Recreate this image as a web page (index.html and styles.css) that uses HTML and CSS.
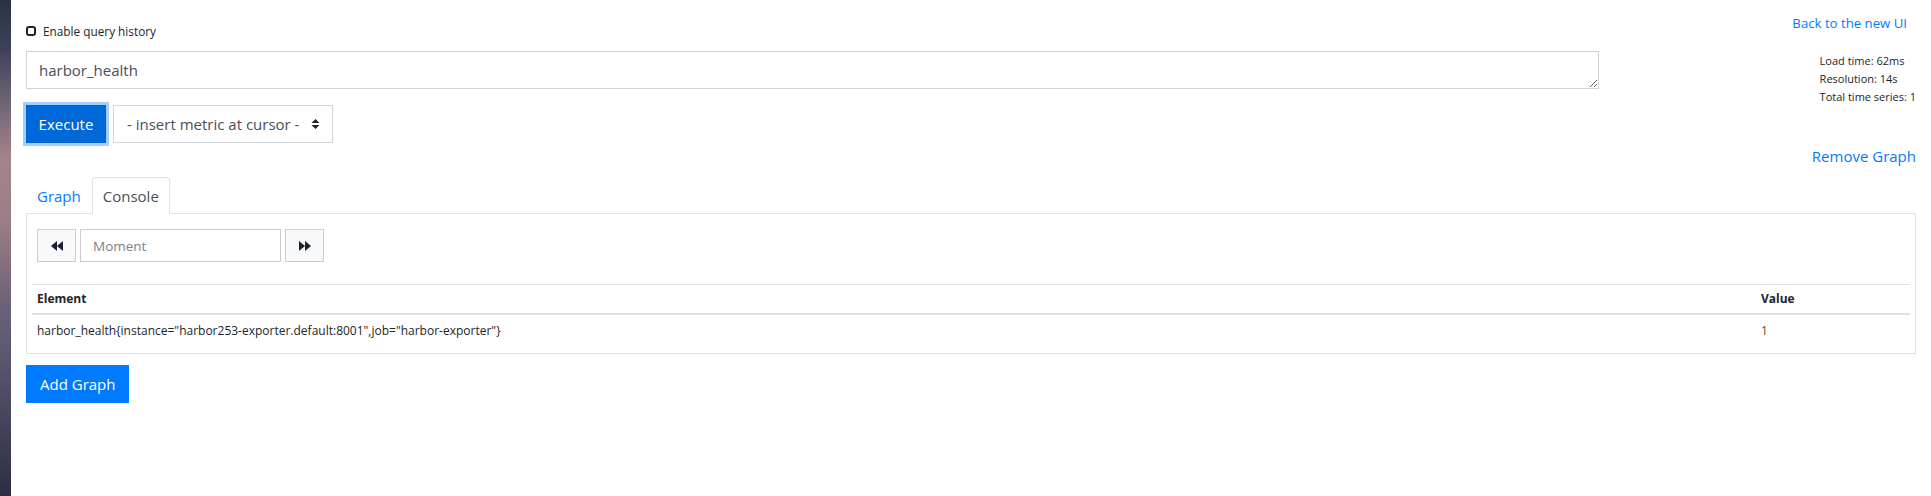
FILE: index.html
```html
<!DOCTYPE html>
<html lang="en">
<head>
<meta charset="utf-8">
<title>Prometheus Time Series Collection and Processing Server</title>
<link rel="stylesheet" href="styles.css">
</head>
<body>
<div class="wallpaper"></div>
<main class="page">
  <div class="top-row">
    <div class="query-col">
      <label class="history"><input type="checkbox" class="history-box"><span>Enable query history</span></label>
      <textarea class="expr" rows="1">harbor_health</textarea>
      <div class="exec-row">
        <button class="btn-execute" type="button">Execute</button>
        <div class="metric-select">
          <span>- insert metric at cursor -</span>
          <svg class="updown" width="9" height="12" viewBox="0 0 9 12"><polygon points="0.5,5 4.5,1 8.5,5"/><polygon points="0.5,7 4.5,11 8.5,7"/></svg>
        </div>
      </div>
    </div>
    <div class="side-col">
      <a class="new-ui" href="#">Back to the new UI</a>
      <div class="stats">
        <div>Load time: 62ms</div>
        <div>Resolution: 14s</div>
        <div>Total time series: 1</div>
      </div>
      <a class="remove" href="#">Remove Graph</a>
    </div>
  </div>

  <ul class="tabs">
    <li class="tab">Graph</li>
    <li class="tab active">Console</li>
  </ul>
  <div class="panel">
    <div class="moment-row">
      <button class="nav-btn" type="button"><svg width="12" height="10" viewBox="0 0 12 10"><polygon points="6,0 0,5 6,10"/><polygon points="12,0 6,5 12,10"/></svg></button>
      <input class="moment" type="text" placeholder="Moment">
      <button class="nav-btn" type="button"><svg width="12" height="10" viewBox="0 0 12 10"><polygon points="0,0 6,5 0,10"/><polygon points="6,0 12,5 6,10"/></svg></button>
    </div>
    <table class="results">
      <thead>
        <tr><th>Element</th><th class="col-value">Value</th></tr>
      </thead>
      <tbody>
        <tr><td>harbor_health{instance=&quot;harbor253-exporter.default:8001&quot;,job=&quot;harbor-exporter&quot;}</td><td class="col-value value">1</td></tr>
      </tbody>
    </table>
  </div>
  <button class="btn-add" type="button">Add Graph</button>
</main>
</body>
</html>
```

FILE: styles.css
```css
* { box-sizing: border-box; }

html, body {
  margin: 0;
  padding: 0;
  background: #fff;
}

body {
  display: flex;
  min-height: 496px;
  font-family: "Open Sans", "Noto Sans", sans-serif;
  color: #212529;
}

.wallpaper {
  flex: 0 0 11px;
  background: linear-gradient(180deg, #2c3144 0%, #3e4259 10%, #6e6274 20%, #a4848a 32%, #9c7d86 45%, #6f6479 60%, #55536b 75%, #3b3d53 90%, #2c2f42 100%);
}

.page {
  flex: 1;
  padding: 0 15px;
}

.top-row {
  display: flex;
  justify-content: space-between;
}

.query-col {
  width: 1573px;
}

.history {
  display: flex;
  align-items: center;
  gap: 7px;
  margin-top: 22px;
  height: 18px;
  font-size: 11.8px;
  line-height: 18px;
}

.history-box {
  appearance: none;
  -webkit-appearance: none;
  margin: 0;
  width: 10px;
  height: 10px;
  border: 2px solid #1f2230;
  border-radius: 3px;
  background: #fff;
}

.expr {
  display: block;
  width: 100%;
  height: 38px;
  margin-top: 11px;
  padding: 6px 12px;
  border: 1px solid #ced4da;
  border-radius: 0;
  font-family: inherit;
  font-size: 15px;
  line-height: 24px;
  color: #495057;
  resize: vertical;
  overflow: hidden;
}

.exec-row {
  display: flex;
  gap: 7px;
  margin-top: 16px;
}

.btn-execute {
  width: 80px;
  height: 38px;
  border: 1px solid #0062cc;
  background: #0069d9;
  color: #fff;
  font-family: inherit;
  font-size: 15px;
  padding: 0;
  box-shadow: 0 0 0 3px #a3cdfd;
}

.metric-select {
  display: flex;
  align-items: center;
  justify-content: space-between;
  width: 220px;
  height: 38px;
  padding: 0 12px 0 13px;
  border: 1px solid #ced4da;
  color: #495057;
  font-size: 15px;
}

.updown polygon { fill: #222; }

.side-col {
  display: flex;
  flex-direction: column;
  align-items: flex-end;
}

.new-ui {
  margin-top: 12px;
  margin-right: 9px;
  font-size: 13.2px;
  line-height: 22px;
  color: #007bff;
  text-decoration: none;
}

.stats {
  margin-top: 18px;
  font-size: 11px;
  line-height: 18px;
  color: #212529;
}

.remove {
  margin-top: 38px;
  font-size: 15px;
  line-height: 24px;
  color: #007bff;
  text-decoration: none;
}

.tabs {
  display: flex;
  list-style: none;
  margin: 9px 0 0;
  padding: 0;
  border-bottom: 1px solid #dee2e6;
}

.tab {
  margin-bottom: -1px;
  padding: 7px 10px 6px;
  border: 1px solid transparent;
  border-radius: 4px 4px 0 0;
  font-size: 15px;
  line-height: 22px;
  color: #007bff;
}

.tab.active {
  color: #495057;
  background: #fff;
  border-color: #dee2e6 #dee2e6 #fff;
}

.panel {
  border: 1px solid #dee2e6;
  border-top: none;
  padding: 15px 5px 6px;
}

.moment-row {
  display: flex;
  gap: 4px;
  margin-left: 5px;
  height: 33px;
}

.nav-btn {
  display: flex;
  align-items: center;
  justify-content: center;
  width: 39px;
  height: 33px;
  padding: 0;
  border: 1px solid #ccc;
  background: #f8f9fa;
}

.nav-btn polygon { fill: #1b2130; }

.moment {
  width: 201px;
  height: 33px;
  padding: 0 12px;
  border: 1px solid #ccc;
  font-family: inherit;
  font-size: 13.5px;
  color: #495057;
}

.moment::placeholder { color: #7b8389; }

.results {
  width: 100%;
  margin-top: 22px;
  border-collapse: collapse;
  table-layout: fixed;
  font-size: 12px;
}

.results th {
  padding: 4px 5px;
  line-height: 20px;
  text-align: left;
  font-weight: 700;
  border-top: 1px solid #dee2e6;
  border-bottom: 2px solid #dee2e6;
}

.results td {
  padding: 7px 5px;
  line-height: 18px;
}

.results .col-value {
  width: 154px;
}

.results .value { color: #6a4a2a; }

.btn-add {
  display: block;
  margin-top: 11px;
  height: 38px;
  padding: 0 13px;
  border: 1px solid #007bff;
  background: #007bff;
  color: #fff;
  font-family: inherit;
  font-size: 15px;
}
```
